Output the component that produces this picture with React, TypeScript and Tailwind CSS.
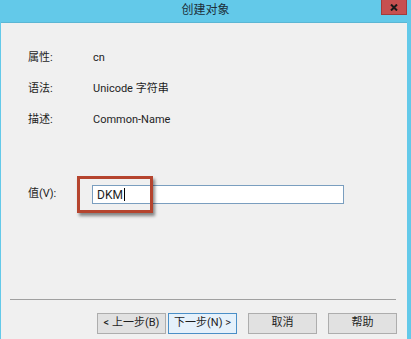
import React from "react";

const ui = "font-['Roboto','Noto_Sans_CJK_SC',sans-serif]";

function Row({ label, value }: { label: string; value: string }) {
  return (
    <div className="flex h-[16px] items-center text-[11px] leading-[16px] text-[#1e1e1e]">
      <span className="w-[65px]">{label}</span>
      <span>{value}</span>
    </div>
  );
}

function Btn({ children, focused }: { children: React.ReactNode; focused?: boolean }) {
  return (
    <button
      className={
        focused
          ? "flex h-[21px] w-[69px] items-center justify-center border border-[#4a8fc7] bg-[#e5f1fb] text-[11px] text-[#1e1e1e]"
          : "flex h-[21px] w-[69px] items-center justify-center border border-[#adadad] bg-[#e1e1e1] text-[11px] text-[#1e1e1e]"
      }
    >
      {children}
    </button>
  );
}

export default function App() {
  return (
    <div className={`flex h-[339px] w-[411px] flex-col overflow-hidden bg-[#63c9e9] ${ui}`}>
      {/* title bar */}
      <div className="relative flex h-[22px] shrink-0 items-center justify-center">
        <span className="pb-[2px] text-[12px] text-[#1c2f3a]">创建对象</span>
        <div className="absolute right-[4px] top-0 flex h-[15px] w-[26px] items-center justify-center border border-[#a33c3c] border-t-0 bg-[#c75050]">
          <svg width="8" height="7" viewBox="0 0 8 7">
            <path d="M1 0.5 L7 6.5 M7 0.5 L1 6.5" stroke="#1a1a1a" strokeWidth="2" />
          </svg>
        </div>
      </div>

      {/* client area */}
      <div className="relative ml-[1px] mr-[4px] flex-1 border-t border-[#5bb6d4] bg-[#f0f0f0]">
        <div className="flex flex-col gap-[15px] pl-[27px] pt-[27px]">
          <Row label="属性:" value="cn" />
          <Row label="语法:" value="Unicode 字符串" />
          <Row label="描述:" value="Common-Name" />
        </div>

        <div className="mt-[57px] flex items-center pl-[27px] text-[11px] text-[#1e1e1e]">
          <span className="w-[64px]">值(V):</span>
          <div className="flex h-[19px] w-[252px] items-center border border-[#7a9ebf] bg-white pl-[4px] text-[12px]">
            <span>DKM</span>
            <span className="ml-[1px] h-[13px] w-[1px] bg-black" />
          </div>
        </div>

        {/* highlight box */}
        <div className="absolute left-[76px] top-[153px] h-[37px] w-[76px] border-[3px] border-[#b5442e] shadow-[2px_3px_3px_rgba(0,0,0,0.45)]" />

        <div className="ml-[9px] mt-[95px] h-[1px] w-[386px] bg-[#a0a0a0]" />

        <div className="mt-[13px] flex pl-[96px]">
          <Btn>&lt; 上一步(B)</Btn>
          <div className="ml-[2px]">
            <Btn focused>下一步(N) &gt;</Btn>
          </div>
          <div className="ml-[11px]">
            <Btn>取消</Btn>
          </div>
          <div className="ml-[11px]">
            <Btn>帮助</Btn>
          </div>
        </div>
      </div>
    </div>
  );
}
